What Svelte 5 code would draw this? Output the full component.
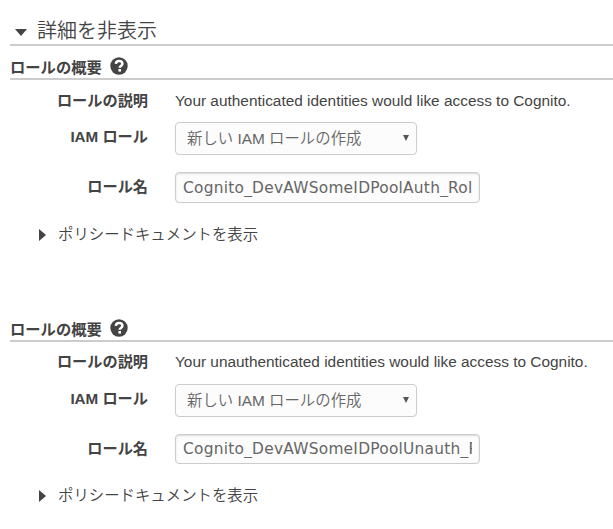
<script>
  const roles = [
    { description: 'Your authenticated identities would like access to Cognito.', name: 'Cognito_DevAWSomeIDPoolAuth_Role' },
    { description: 'Your unauthenticated identities would like access to Cognito.', name: 'Cognito_DevAWSomeIDPoolUnauth_Role' }
  ];
</script>

<main>
  <header><i class="down"></i><span>詳細を非表示</span></header>
  {#each roles as role, i}
    <section class:second={i === 1}>
      <h2><span>ロールの概要</span>
        <svg width="18" height="18" viewBox="0 0 18 18"><circle cx="9" cy="9" r="8.7" fill="#444" /><path d="M5.8 6.8C6 4.8 7.2 4 9 4c2 0 3.4 1 3.4 2.7 0 2.2-2.7 2.2-2.7 4" fill="none" stroke="#fff" stroke-width="2.5" /><path d="M8.4 12h2.6v2.6H8.4z" fill="#fff" /></svg>
      </h2>
      <div class="row desc"><b>ロールの説明</b><span>{role.description}</span></div>
      <div class="row sel"><b>IAM ロール</b><div class="select"><span>新しい IAM ロールの作成</span><i></i></div></div>
      <div class="row nm"><b>ロール名</b><input type="text" value={role.name} /></div>
      <div class="policy"><i></i><span>ポリシードキュメントを表示</span></div>
    </section>
  {/each}
</main>

<style>
  :global(body) { background: #fff; overflow: hidden; }
  main { width: 613px; height: 529px; overflow: hidden; box-sizing: border-box; padding: 16px 0 0 10px; color: #444; font: 350 15.4px/20px "Liberation Sans", "Noto Sans CJK JP", sans-serif; white-space: nowrap; }
  header { display: flex; align-items: center; height: 28px; border-bottom: 2px solid #ccc; font-size: 20px; }
  header span { padding-top: 2px; }
  .down { margin: 4px 10px 0 5px; border: 6px solid transparent; border-top: 7px solid #444; border-bottom: 0; }
  section { height: 262px; box-sizing: border-box; padding-top: 9px; }
  h2 { display: flex; align-items: center; gap: 8px; height: 23px; margin: 0; border-bottom: 2px solid #ccc; font-size: 15.3px; }
  h2 span { padding-top: 2px; }
  h2 svg { margin-top: -2px; }
  .row { display: flex; align-items: center; }
  .row b { width: 138px; margin-right: 27px; text-align: right; font-weight: 700; font-size: 15.2px; }
  .desc { height: 20px; margin-top: 11px; }
  .sel { height: 33px; margin-top: 11px; }
  .sel b { padding-bottom: 4px; }
  .nm { height: 31px; margin-top: 17px; }
  .nm b { padding-bottom: 2px; }
  .select, input { box-sizing: border-box; border: 1px solid #ccc; border-radius: 4px; color: #666; background: #fcfcfc; }
  .select { display: flex; align-items: center; width: 242px; height: 33px; padding: 0 7px 0 11px; justify-content: space-between; }
  .select i { margin-top: -2px; border: 3px solid transparent; border-top: 6px solid #555; border-bottom: 0; }
  input { width: 305px; height: 31px; margin: 0; padding: 0 7px; font: 15.4px "DejaVu Sans", sans-serif; letter-spacing: .25px; box-shadow: inset 0 1px 2px #0002; }
  .policy { display: flex; align-items: center; height: 20px; margin-top: 22px; padding-left: 29px; gap: 12px; }
  .policy i { border: 6px solid transparent; border-left: 7px solid #444; border-right: 0; }
  .second .desc { margin: 10px 0 12px; }
  .second .sel { margin-top: 0; }
  .second input { height: 30px; }
  .second .nm { height: 30px; }
  .second .nm b { padding-bottom: 0; }
</style>
